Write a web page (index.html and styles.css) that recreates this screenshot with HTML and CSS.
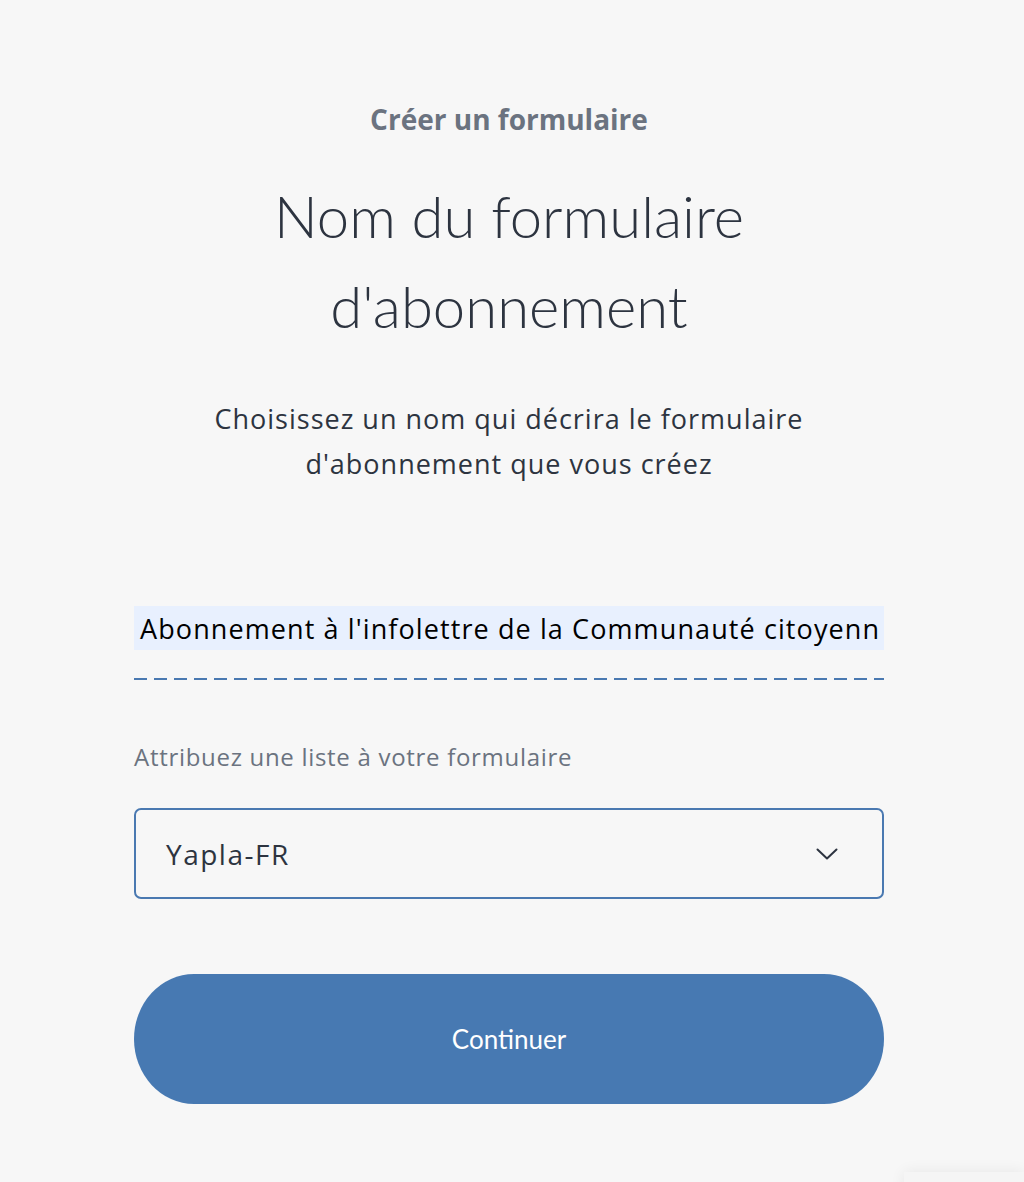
FILE: index.html
```html
<!DOCTYPE html>
<html lang="fr">
<head>
<meta charset="utf-8">
<title>Créer un formulaire</title>
<link rel="stylesheet" href="styles.css">
</head>
<body>
<main class="page">
  <p class="eyebrow">Créer un formulaire</p>
  <h1 class="title">Nom du formulaire<br>d'abonnement</h1>
  <p class="lead">Choisissez un nom qui décrira le formulaire<br>d'abonnement que vous créez</p>

  <form class="form">
    <div class="name-field">
      <div class="name-input">Abonnement à l'infolettre de la Communauté citoyenn</div>
      <div class="dash-line"></div>
    </div>

    <label class="list-label">Attribuez une liste à votre formulaire</label>
    <div class="select">
      <span class="select-value">Yapla-FR</span>
      <svg class="chevron" width="22" height="12" viewBox="0 0 22 12" aria-hidden="true">
        <path d="M1.5 1.5 L11 10.5 L20.5 1.5" fill="none" stroke="#2d3440" stroke-width="2" stroke-linecap="round" stroke-linejoin="round"/>
      </svg>
    </div>

    <button type="button" class="btn">Continuer</button>
  </form>
</main>
<div class="corner-shadow"></div>
</body>
</html>
```
FILE: styles.css
```css
html, body {
  margin: 0;
  padding: 0;
  background: #f7f7f7;
}
body {
  font-family: "Open Sans", "Noto Sans", sans-serif;
  color: #2d3440;
  height: 1182px;
  overflow: hidden;
}
.page {
  width: 750px;
  margin: 0 auto;
  transform: translateX(-3px);
  display: flex;
  flex-direction: column;
  align-items: center;
  padding-top: 100px;
}
.eyebrow {
  margin: 0;
  font-size: 28px;
  font-weight: 700;
  color: #6b7380;
  line-height: 38px;
}
.title {
  margin: 33px 0 0;
  font-family: "Lato", "Open Sans", sans-serif;
  font-size: 58px;
  font-weight: 300;
  line-height: 90px;
  text-align: center;
  color: #2d3440;
}
.lead {
  margin: 45px 0 0;
  font-size: 27px;
  letter-spacing: 1px;
  line-height: 45px;
  text-align: center;
  color: #2d3440;
}
.form {
  width: 750px;
  margin-top: 120px;
  display: flex;
  flex-direction: column;
}
.name-input {
  background: #e8f0fe;
  height: 44px;
  line-height: 46px;
  font-size: 27px;
  letter-spacing: 1.1px;
  color: #000;
  padding-left: 6px;
  white-space: nowrap;
  overflow: hidden;
}
.dash-line {
  margin-top: 28px;
  height: 2px;
  background: repeating-linear-gradient(90deg, #4a79b1 0 13px, transparent 13px 20px);
}
.list-label {
  margin-top: 62px;
  font-size: 24px;
  letter-spacing: 0.7px;
  color: #6b7380;
  line-height: 30px;
}
.select {
  margin-top: 36px;
  height: 87px;
  border: 2px solid #4a79b1;
  border-radius: 7px;
  display: flex;
  align-items: center;
  justify-content: space-between;
  padding: 0 44px 0 30px;
}
.select-value {
  font-size: 28px;
  letter-spacing: 1.5px;
  color: #2d3440;
}
.chevron {
  display: block;
}
.btn {
  margin-top: 75px;
  height: 130px;
  border: none;
  border-radius: 60px / 65px;
  background: #4779b2;
  color: #ffffff;
  font-family: "Lato", "Open Sans", sans-serif;
  font-size: 26px;
  cursor: pointer;
}
.corner-shadow {
  position: fixed;
  right: 0;
  bottom: -40px;
  width: 120px;
  height: 50px;
  background: #f5f5f5;
  box-shadow: 0 0 14px rgba(0, 0, 0, 0.07);
}
```
